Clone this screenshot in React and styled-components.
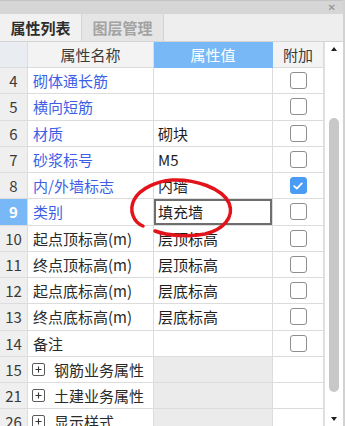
import React from 'react';
import styled, { createGlobalStyle } from 'styled-components';

const Global = createGlobalStyle`
  html, body { margin: 0; padding: 0; background: #fff; }
  body { font-family: "Noto Sans CJK SC", "Noto Sans", sans-serif; }
`;

const Window = styled.div`
  position: relative;
  width: 345px;
  height: 426px;
  overflow: hidden;
  display: flex;
  flex-direction: column;
  background: #fff;
  box-sizing: border-box;
  border-right: 2px solid #d2d2d2;
`;

const TitleBar = styled.div`
  height: 14px;
  flex: none;
  background: #d6d6d6;
  border-top: 1px solid #c4c4c4;
  box-sizing: border-box;
  display: flex;
  align-items: center;
  justify-content: flex-end;
  padding-right: 7px;
`;

const Close = styled.span`
  font-family: "DejaVu Sans", sans-serif;
  font-size: 10px;
  line-height: 1;
  color: #8c8c8c;
`;

const TabStrip = styled.div`
  height: 28px;
  flex: none;
  display: flex;
  background: #eeeeee;
  border-bottom: 1px solid #d4d4d4;
  box-sizing: border-box;
`;

const Tab = styled.div`
  width: 81px;
  display: flex;
  align-items: center;
  justify-content: center;
  border-right: 1px solid #d4d4d4;
  background: ${p => (p.$active ? '#f1f1f1' : '#e5e5e5')};
  color: ${p => (p.$active ? '#2e2e2e' : '#a3a3a3')};
  font-size: 15px;
  font-weight: 700;
`;

const Body = styled.div`
  flex: 1;
  display: flex;
  min-height: 0;
`;

const Table = styled.div`
  width: 324px;
  flex: none;
  display: flex;
  flex-direction: column;
`;

const Row = styled.div`
  display: grid;
  grid-template-columns: 28px 126px 119px 51px;
  height: ${p => p.$h}px;
  flex: none;
`;

const Cell = styled.div`
  box-sizing: border-box;
  border-right: 1px solid #dcdcdc;
  border-bottom: 1px solid #dcdcdc;
  display: flex;
  align-items: center;
  min-width: 0;
  white-space: nowrap;
  overflow: hidden;
  font-size: 15px;
  color: #2a2a2a;
`;

const HeadCell = styled(Cell)`
  justify-content: center;
  background: ${p => (p.$hl ? '#79b8f6' : p.$corner ? '#e9edf2' : '#f3f3f3')};
  color: ${p => (p.$hl ? '#ffffff' : '#3a3a3a')};
  border-color: ${p => (p.$hl ? '#79b8f6' : '#dcdcdc')};
`;

const NumCell = styled(Cell)`
  justify-content: center;
  background: ${p => (p.$sel ? '#79b8f6' : '#efefef')};
  color: ${p => (p.$sel ? '#ffffff' : '#3a3a3a')};
  font-weight: ${p => (p.$sel ? 700 : 400)};
`;

const NameCell = styled(Cell)`
  padding-left: 5px;
  color: ${p => (p.$blue ? '#3d5fe6' : '#2a2a2a')};
`;

const ValueCell = styled(Cell)`
  padding-left: 4px;
  background: ${p => (p.$group ? '#ebebeb' : '#ffffff')};
  box-shadow: ${p => (p.$edit ? 'inset 0 0 0 2px #6e6e6e' : 'none')};
  color: #1e1e1e;
`;

const AddCell = styled(Cell)`
  justify-content: center;
`;

const Check = styled.span`
  width: 17px;
  height: 17px;
  box-sizing: border-box;
  border-radius: 3px;
  border: 1.5px solid ${p => (p.$on ? '#4a9bf4' : '#8e8e8e')};
  background: ${p => (p.$on ? '#4a9bf4' : '#ffffff')};
  display: flex;
  align-items: center;
  justify-content: center;
`;

const Expander = styled.span`
  width: 13px;
  height: 13px;
  box-sizing: border-box;
  border: 1px solid #5a5a5a;
  border-radius: 2px;
  margin-left: -1px;
  margin-right: 9px;
  display: flex;
  align-items: center;
  justify-content: center;
  flex: none;
`;

const Scrollbar = styled.div`
  flex: 1;
  display: flex;
  flex-direction: column;
  align-items: center;
  border-left: 1px solid #e2e2e2;
  background: #ffffff;
`;

const Arrow = styled.span`
  width: 0;
  height: 0;
  border-left: 3.5px solid transparent;
  border-right: 3.5px solid transparent;
  ${p =>
    p.$down
      ? 'border-top: 4px solid #1e1e1e; margin-top: auto; margin-bottom: 5px;'
      : 'border-bottom: 4px solid #1e1e1e; margin-top: 5px;'}
`;

const Thumb = styled.div`
  width: 10px;
  height: 274px;
  margin-top: 67px;
  border-radius: 5px;
  background: #c8c8c8;
`;

const Annotation = styled.svg`
  position: absolute;
  left: 0;
  top: 0;
  pointer-events: none;
`;

const rows = [
  { n: '4', name: '砌体通长筋', blue: true },
  { n: '5', name: '横向短筋', blue: true },
  { n: '6', name: '材质', blue: true, value: '砌块' },
  { n: '7', name: '砂浆标号', blue: true, value: 'M5' },
  { n: '8', name: '内/外墙标志', blue: true, value: '内墙', checked: true },
  { n: '9', name: '类别', blue: true, value: '填充墙', selected: true },
  { n: '10', name: '起点顶标高(m)', value: '层顶标高' },
  { n: '11', name: '终点顶标高(m)', value: '层顶标高' },
  { n: '12', name: '起点底标高(m)', value: '层底标高' },
  { n: '13', name: '终点底标高(m)', value: '层底标高' },
  { n: '14', name: '备注' },
  { n: '15', name: '钢筋业务属性', group: true },
  { n: '21', name: '土建业务属性', group: true },
  { n: '26', name: '显示样式', group: true },
];

const CheckMark = () => (
  <svg width="10" height="8" viewBox="0 0 10 8">
    <path d="M1.2 4.2 L3.8 6.6 L8.8 1.4" fill="none" stroke="#fff" strokeWidth="1.8" strokeLinecap="round" strokeLinejoin="round" />
  </svg>
);

const Plus = () => (
  <svg width="9" height="9" viewBox="0 0 9 9">
    <path d="M4.5 1.5 V7.5 M1.5 4.5 H7.5" stroke="#333" strokeWidth="1.1" />
  </svg>
);

export default function App() {
  return (
    <>
      <Global />
      <Window>
        <TitleBar>
          <Close>✕</Close>
        </TitleBar>
        <TabStrip>
          <Tab $active>属性列表</Tab>
          <Tab>图层管理</Tab>
        </TabStrip>
        <Body>
          <Table>
            <Row $h={26}>
              <HeadCell $corner />
              <HeadCell>属性名称</HeadCell>
              <HeadCell $hl>属性值</HeadCell>
              <HeadCell>附加</HeadCell>
            </Row>
            {rows.map(r => (
              <Row key={r.n} $h={26.25}>
                <NumCell $sel={r.selected}>{r.n}</NumCell>
                <NameCell $blue={r.blue}>
                  {r.group && (
                    <Expander>
                      <Plus />
                    </Expander>
                  )}
                  {r.name}
                </NameCell>
                <ValueCell $group={r.group} $edit={r.selected}>
                  {r.value}
                </ValueCell>
                <AddCell>
                  {!r.group && <Check $on={r.checked}>{r.checked && <CheckMark />}</Check>}
                </AddCell>
              </Row>
            ))}
          </Table>
          <Scrollbar>
            <Arrow />
            <Thumb />
            <Arrow $down />
          </Scrollbar>
        </Body>
        <Annotation width="345" height="426" viewBox="0 0 345 426">
          <path
            d="M143 226 C133 222 129 210 134 200 C140 188 158 181 172 180 C195 179 222 188 229 203 C235 218 222 230 205 234 C190 237 168 236 155 231"
            fill="none"
            stroke="#e3131b"
            strokeWidth="3.5"
            strokeLinecap="round"
            strokeLinejoin="round"
          />
        </Annotation>
      </Window>
    </>
  );
}
